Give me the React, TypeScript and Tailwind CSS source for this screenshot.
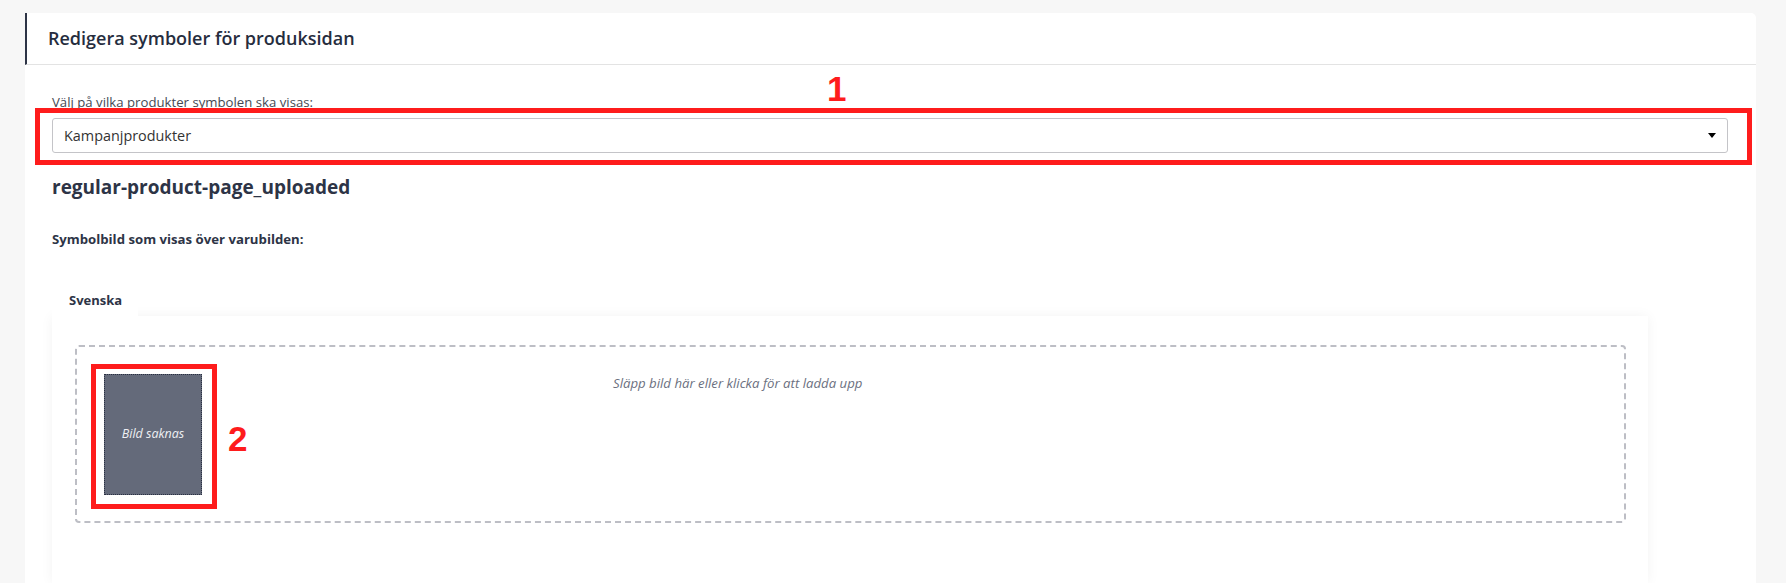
import React from 'react';

const font = { fontFamily: '"Open Sans", "Noto Sans", sans-serif' };

function Marker({ n, className }: { n: string; className: string }) {
    return (
        <span
            className={`absolute text-[35px] leading-none font-bold text-[#fe1c1c] ${className}`}
            style={{ fontFamily: '"Liberation Sans", Arial, sans-serif' }}
        >
            {n}
        </span>
    );
}

export default function App() {
    return (
        <div className="min-h-[583px] bg-[#f7f7f7] pt-[13px] pl-[25px] pr-[30px]" style={font}>
            <div className="bg-white rounded-tr-[5px]">
                {/* Header */}
                <div className="h-[52px] flex items-center pl-[21px] border-l-2 border-l-[#2d3446] border-b border-b-[#e3e3e3]">
                    <h2 className="text-[18px] font-semibold text-[#262d3e]">Redigera symboler för produksidan</h2>
                </div>

                {/* Body */}
                <div className="relative pt-[28px] pl-[27px] pr-[28px]">
                    <label className="block text-[13.2px] leading-[18px] text-[#454953]">
                        Välj på vilka produkter symbolen ska visas:
                    </label>
                    <div className="mt-[7px] h-[35px] flex items-center justify-between border border-[#c4c4c8] rounded-[3px] pl-[11px] pr-[11px]">
                        <span className="text-[14.4px] text-[#333]">Kampanjprodukter</span>
                        <span className="w-0 h-0 border-l-[4px] border-r-[4px] border-t-[5px] border-l-transparent border-r-transparent border-t-black" />
                    </div>

                    <h3 className="mt-[22px] text-[19px] leading-[24px] font-bold text-[#2d3446]">
                        regular-product-page_uploaded
                    </h3>

                    <p className="mt-[31px] text-[13.2px] leading-[18px] font-bold text-[#2d3446]">
                        Symbolbild som visas över varubilden:
                    </p>

                    {/* Tabs */}
                    <div className="mt-[38px] flex">
                        <div className="relative z-10 h-[30px] w-[86px] bg-white pl-[17px] flex items-center">
                            <span className="text-[13px] font-bold text-[#2d3446]">Svenska</span>
                        </div>
                    </div>
                    <div className="w-[1596px] bg-white shadow-[0_0_12px_rgba(0,0,0,0.05)] pt-[29px] pl-[23px] pr-[22px] pb-[60px]">
                        <div className="relative h-[178px] border-2 border-dashed border-[#bdbec5] rounded-[4px] p-[27px] flex items-start">
                            <div className="w-[98px] h-[121px] shrink-0 bg-[#646a7a] border border-dotted border-[#2a3042] flex items-center justify-center">
                                <span className="text-[12.5px] italic text-[#eef0f4]">Bild saknas</span>
                            </div>
                            <p className="ml-[411px] text-[13.2px] leading-[18px] italic text-[#6b7080]">
                                Släpp bild här eller klicka för att ladda upp
                            </p>

                            {/* Annotation 2 */}
                            <div className="absolute left-[14px] top-[17px] w-[126px] h-[145px] border-[5px] border-[#fe1c1c]" />
                            <Marker n="2" className="left-[151px] top-[74px]" />
                        </div>
                    </div>

                    {/* Annotation 1 */}
                    <div className="absolute left-[10px] right-[4px] top-[43px] h-[57px] border-[5px] border-[#fe1c1c]" />
                    <Marker n="1" className="left-[802px] top-[6px]" />
                </div>
            </div>
        </div>
    );
}
